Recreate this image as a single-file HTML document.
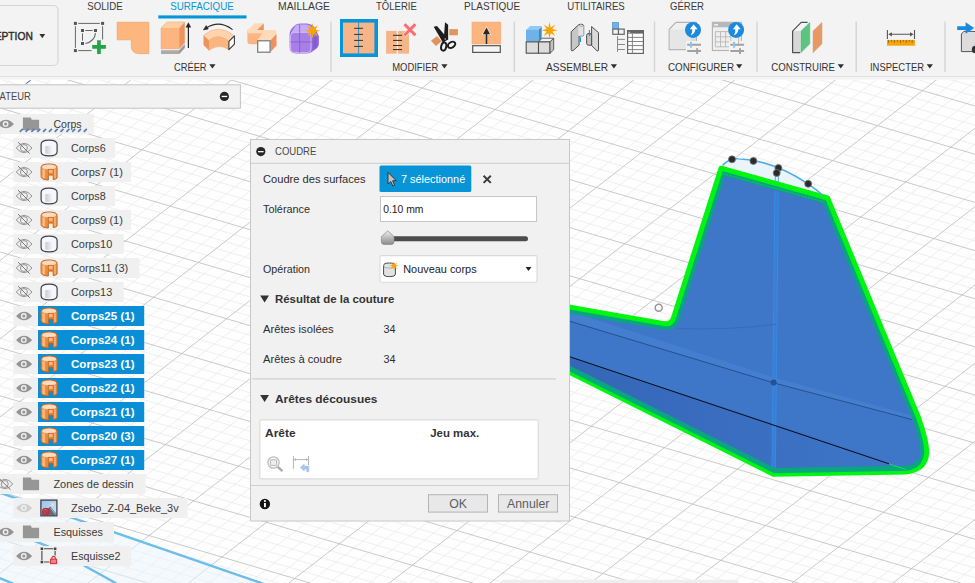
<!DOCTYPE html>
<html><head><meta charset="utf-8"><title>COUDRE</title>
<style>
html,body{margin:0;padding:0;background:#fff;overflow:hidden}
svg{display:block;font-family:'Liberation Sans', Arial, sans-serif}
text{white-space:pre}
</style></head><body>
<svg width="975" height="583" viewBox="0 0 975 583">
<rect width="975" height="583" fill="#fefefe"/>
<defs><clipPath id="vp"><rect x="0" y="79" width="975" height="504"/></clipPath></defs>
<g clip-path="url(#vp)" fill="none"><path d="M1265.5 -1265.7L-1852.3 1178.8M-888.5 -1010.6L4261.9 498.7M1280.3 -1261.4L-1837.9 1183.1M-897.4 -1003.6L4252.6 505.7M1295.0 -1257.1L-1823.5 1187.4M-906.3 -996.5L4243.4 512.7M1309.8 -1252.8L-1809.2 1191.7M-915.2 -989.4L4234.1 519.8M1339.3 -1244.2L-1780.4 1200.2M-933.0 -975.3L4215.6 533.8M1354.1 -1239.9L-1766.0 1204.5M-941.9 -968.3L4206.3 540.8M1368.8 -1235.5L-1751.6 1208.8M-950.7 -961.2L4197.0 547.9M1383.6 -1231.2L-1737.2 1213.0M-959.6 -954.2L4187.8 554.9M1413.1 -1222.6L-1708.4 1221.6M-977.4 -940.1L4169.2 568.9M1427.9 -1218.3L-1694.0 1225.9M-986.3 -933.0L4160.0 575.9M1442.6 -1214.0L-1679.6 1230.1M-995.2 -926.0L4150.7 583.0M1457.4 -1209.7L-1665.2 1234.4M-1004.1 -918.9L4141.5 590.0M1486.9 -1201.1L-1636.4 1243.0M-1021.8 -904.8L4123.0 604.0M1501.7 -1196.8L-1622.0 1247.2M-1030.7 -897.8L4113.7 611.0M1516.5 -1192.5L-1607.6 1251.5M-1039.6 -890.7L4104.4 618.1M1531.2 -1188.2L-1593.2 1255.8M-1048.5 -883.7L4095.2 625.1M1560.8 -1179.6L-1564.4 1264.3M-1066.2 -869.6L4076.7 639.1M1575.5 -1175.3L-1550.0 1268.6M-1075.1 -862.5L4067.4 646.1M1590.3 -1170.9L-1535.6 1272.9M-1084.0 -855.5L4058.2 653.1M1605.1 -1166.6L-1521.2 1277.2M-1092.9 -848.5L4048.9 660.1M1634.6 -1158.0L-1492.4 1285.7M-1110.6 -834.4L4030.5 674.1M1649.4 -1153.7L-1478.0 1290.0M-1119.5 -827.3L4021.2 681.2M1664.2 -1149.4L-1463.6 1294.3M-1128.4 -820.3L4012.0 688.2M1678.9 -1145.1L-1449.2 1298.6M-1137.2 -813.3L4002.7 695.2M1708.5 -1136.5L-1420.4 1307.1M-1155.0 -799.2L3984.2 709.2M1723.3 -1132.2L-1405.9 1311.4M-1163.8 -792.2L3975.0 716.2M1738.0 -1127.9L-1391.5 1315.7M-1172.7 -785.1L3965.8 723.2M1752.8 -1123.5L-1377.1 1319.9M-1181.6 -778.1L3956.5 730.2M1782.4 -1114.9L-1348.3 1328.5M-1199.3 -764.0L3938.1 744.2M1797.2 -1110.6L-1333.9 1332.8M-1208.2 -757.0L3928.8 751.2M1811.9 -1106.3L-1319.5 1337.1M-1217.0 -750.0L3919.6 758.2M1826.7 -1102.0L-1305.1 1341.3M-1225.9 -742.9L3910.4 765.2M1856.3 -1093.4L-1276.2 1349.9M-1243.6 -728.9L3891.9 779.2M1871.1 -1089.1L-1261.8 1354.2M-1252.5 -721.8L3882.7 786.2M1885.8 -1084.7L-1247.4 1358.5M-1261.3 -714.8L3873.5 793.2M1900.6 -1080.4L-1233.0 1362.7M-1270.2 -707.8L3864.2 800.2M1930.2 -1071.8L-1204.1 1371.3M-1287.9 -693.7L3845.8 814.1M1945.0 -1067.5L-1189.7 1375.6M-1296.7 -686.7L3836.6 821.1M1959.8 -1063.2L-1175.3 1379.9M-1305.6 -679.7L3827.3 828.1M1974.6 -1058.9L-1160.9 1384.2M-1314.4 -672.7L3818.1 835.1M2004.1 -1050.2L-1132.0 1392.7M-1332.1 -658.6L3799.7 849.1M2018.9 -1045.9L-1117.6 1397.0M-1341.0 -651.6L3790.5 856.1M2033.7 -1041.6L-1103.2 1401.3M-1349.8 -644.6L3781.2 863.1M2048.5 -1037.3L-1088.8 1405.6M-1358.7 -637.6L3772.0 870.1M2078.1 -1028.7L-1059.9 1414.1M-1376.3 -623.6L3753.6 884.0M2092.9 -1024.4L-1045.5 1418.4M-1385.2 -616.5L3744.4 891.0M2107.7 -1020.0L-1031.1 1422.7M-1394.0 -609.5L3735.2 898.0M2122.5 -1015.7L-1016.6 1427.0M-1402.9 -602.5L3726.0 905.0M2152.1 -1007.1L-987.8 1435.5M-1420.5 -588.5L3707.6 918.9M2166.9 -1002.8L-973.4 1439.8M-1429.4 -581.5L3698.4 925.9M2181.7 -998.5L-958.9 1444.1M-1438.2 -574.5L3689.1 932.9M2196.5 -994.2L-944.5 1448.4M-1447.0 -567.5L3679.9 939.9M2226.1 -985.5L-915.6 1457.0M-1464.7 -553.4L3661.5 953.8M2240.9 -981.2L-901.2 1461.3M-1473.5 -546.4L3652.3 960.8M2255.7 -976.9L-886.8 1465.5M-1482.4 -539.4L3643.1 967.8M2270.5 -972.6L-872.3 1469.8M-1491.2 -532.4L3633.9 974.7M2300.1 -963.9L-843.5 1478.4M-1508.9 -518.4L3615.5 988.7M2314.9 -959.6L-829.0 1482.7M-1517.7 -511.4L3606.3 995.7M2329.7 -955.3L-814.6 1487.0M-1526.5 -504.4L3597.2 1002.6M2344.5 -951.0L-800.2 1491.3M-1535.3 -497.4L3588.0 1009.6M2374.1 -942.3L-771.3 1499.8M-1553.0 -483.4L3569.6 1023.5M2388.9 -938.0L-756.9 1504.1M-1561.8 -476.4L3560.4 1030.5M2403.7 -933.7L-742.4 1508.4M-1570.6 -469.4L3551.2 1037.5M2418.5 -929.4L-728.0 1512.7M-1579.4 -462.4L3542.0 1044.4M2448.1 -920.8L-699.1 1521.3M-1597.1 -448.4L3523.6 1058.4M2462.9 -916.4L-684.7 1525.6M-1605.9 -441.4L3514.5 1065.3M2477.8 -912.1L-670.2 1529.8M-1614.7 -434.4L3505.3 1072.3M2492.6 -907.8L-655.8 1534.1M-1623.5 -427.4L3496.1 1079.2M2522.2 -899.2L-626.9 1542.7M-1641.1 -413.5L3477.7 1093.2M2537.0 -894.8L-612.4 1547.0M-1650.0 -406.5L3468.5 1100.1M2551.8 -890.5L-598.0 1551.3M-1658.8 -399.5L3459.4 1107.1M2566.6 -886.2L-583.5 1555.6M-1667.6 -392.5L3450.2 1114.0M2596.3 -877.5L-554.6 1564.2M-1685.2 -378.5L3431.8 1127.9M2611.1 -873.2L-540.2 1568.4M-1694.0 -371.5L3422.7 1134.9M2625.9 -868.9L-525.8 1572.7M-1702.8 -364.5L3413.5 1141.9M2640.7 -864.6L-511.3 1577.0M-1711.6 -357.6L3404.3 1148.8M2670.4 -855.9L-482.4 1585.6M-1729.2 -343.6L3386.0 1162.7M2685.2 -851.6L-467.9 1589.9M-1738.0 -336.6L3376.8 1169.7M2700.0 -847.3L-453.5 1594.2M-1746.8 -329.6L3367.6 1176.6M2714.8 -843.0L-439.0 1598.5M-1755.6 -322.7L3358.5 1183.6M2744.5 -834.3L-410.1 1607.1M-1773.2 -308.7L3340.1 1197.5M2759.3 -830.0L-395.7 1611.4M-1782.0 -301.7L3331.0 1204.4M2774.1 -825.7L-381.2 1615.7M-1790.8 -294.7L3321.8 1211.4M2788.9 -821.3L-366.8 1619.9M-1799.6 -287.8L3312.7 1218.3M2818.6 -812.7L-337.9 1628.5M-1817.2 -273.8L3294.3 1232.2M2833.4 -808.4L-323.4 1632.8M-1826.0 -266.8L3285.2 1239.1M2848.3 -804.1L-308.9 1637.1M-1834.7 -259.9L3276.0 1246.1M2863.1 -799.7L-294.5 1641.4M-1843.5 -252.9L3266.9 1253.0M2892.7 -791.1L-265.6 1650.0M-1861.1 -238.9L3248.6 1266.9M2907.6 -786.7L-251.1 1654.3M-1869.9 -232.0L3239.4 1273.8M2922.4 -782.4L-236.6 1658.6M-1878.7 -225.0L3230.3 1280.8M2937.2 -778.1L-222.2 1662.9M-1887.5 -218.0L3221.1 1287.7M2966.9 -769.4L-193.2 1671.5M-1905.0 -204.1L3202.8 1301.6M2981.7 -765.1L-178.8 1675.8M-1913.8 -197.1L3193.7 1308.5M2996.6 -760.8L-164.3 1680.1M-1922.6 -190.2L3184.5 1315.4M3011.4 -756.5L-149.9 1684.4M-1931.4 -183.2L3175.4 1322.4M3041.1 -747.8L-120.9 1692.9M-1948.9 -169.3L3157.1 1336.2M3055.9 -743.5L-106.4 1697.2M-1957.7 -162.3L3147.9 1343.2M3070.8 -739.2L-92.0 1701.5M-1966.5 -155.4L3138.8 1350.1M3085.6 -734.8L-77.5 1705.8M-1975.2 -148.4L3129.7 1357.0M3115.3 -726.2L-48.6 1714.4M-1992.8 -134.5L3111.4 1370.9M3130.1 -721.8L-34.1 1718.7M-2001.6 -127.5L3102.2 1377.8M3145.0 -717.5L-19.6 1723.0M-2010.3 -120.6L3093.1 1384.7M3159.8 -713.2L-5.2 1727.3M-2019.1 -113.6L3084.0 1391.7M3189.5 -704.5L23.8 1735.9M-2036.6 -99.7L3065.7 1405.5M3204.3 -700.2L38.3 1740.2M-2045.4 -92.7L3056.6 1412.4M3219.2 -695.9L52.7 1744.5M-2054.2 -85.8L3047.4 1419.4M3234.0 -691.5L67.2 1748.8M-2062.9 -78.8L3038.3 1426.3M3263.7 -682.9L96.2 1757.4M-2080.4 -64.9L3020.1 1440.1M3278.6 -678.5L110.6 1761.7M-2089.2 -58.0L3010.9 1447.0M3293.4 -674.2L125.1 1766.0M-2098.0 -51.0L3001.8 1454.0M3308.3 -669.9L139.6 1770.3M-2106.7 -44.1L2992.7 1460.9M3338.0 -661.2L168.6 1778.9M-2124.2 -30.2L2974.4 1474.7M3352.8 -656.9L183.0 1783.2M-2133.0 -23.2L2965.3 1481.6M3367.7 -652.6L197.5 1787.5M-2141.7 -16.3L2956.2 1488.5M3382.5 -648.2L212.0 1791.8M-2150.5 -9.3L2947.1 1495.4M3412.2 -639.6L241.0 1800.4M-2168.0 4.5L2928.8 1509.3M3427.1 -635.2L255.5 1804.7M-2176.7 11.5L2919.7 1516.2M3441.9 -630.9L269.9 1809.0M-2185.5 18.4L2910.6 1523.1M3456.8 -626.6L284.4 1813.3M-2194.2 25.4L2901.5 1530.0M3486.5 -617.9L313.4 1821.9M-2211.7 39.2L2883.3 1543.8M3501.4 -613.6L327.9 1826.2M-2220.5 46.2L2874.2 1550.7M3516.2 -609.2L342.4 1830.5M-2229.2 53.1L2865.1 1557.6M3531.1 -604.9L356.9 1834.8M-2238.0 60.1L2855.9 1564.5M3560.8 -596.2L385.8 1843.4M-2255.5 73.9L2837.7 1578.3M3575.7 -591.9L400.3 1847.7M-2264.2 80.9L2828.6 1585.2M3590.5 -587.6L414.8 1852.0M-2272.9 87.8L2819.5 1592.1M3605.4 -583.2L429.3 1856.3M-2281.7 94.7L2810.4 1599.0M3635.1 -574.5L458.3 1864.9M-2299.1 108.6L2792.2 1612.8M3650.0 -570.2L472.8 1869.2M-2307.9 115.5L2783.1 1619.7M3664.9 -565.9L487.3 1873.5M-2316.6 122.5L2774.0 1626.6M3679.7 -561.5L501.8 1877.8M-2325.3 129.4L2764.9 1633.5M3709.5 -552.9L530.8 1886.5M-2342.8 143.2L2746.7 1647.3M3724.3 -548.5L545.3 1890.8M-2351.5 150.2L2737.6 1654.2M3739.2 -544.2L559.8 1895.1M-2360.3 157.1L2728.5 1661.1M3754.1 -539.9L574.3 1899.4M-2369.0 164.0L2719.4 1668.0" stroke="#eaeaea" stroke-width=".75"/>
<path d="M1250.8 -1270.0L-1866.7 1174.6M-879.6 -1017.7L4271.2 491.7M1324.5 -1248.5L-1794.8 1195.9M-924.1 -982.4L4224.8 526.8M1398.3 -1226.9L-1722.8 1217.3M-968.5 -947.1L4178.5 561.9M1472.2 -1205.4L-1650.8 1238.7M-1013.0 -911.9L4132.2 597.0M1546.0 -1183.9L-1578.8 1260.1M-1057.4 -876.6L4085.9 632.1M1619.8 -1162.3L-1506.8 1281.4M-1101.7 -841.4L4039.7 667.1M1693.7 -1140.8L-1434.8 1302.8M-1146.1 -806.2L3993.5 702.2M1767.6 -1119.2L-1362.7 1324.2M-1190.4 -771.1L3947.3 737.2M1841.5 -1097.7L-1290.6 1345.6M-1234.7 -735.9L3901.1 772.2M1915.4 -1076.1L-1218.6 1367.0M-1279.0 -700.8L3855.0 807.2M1989.4 -1054.6L-1146.5 1388.4M-1323.3 -665.7L3808.9 842.1M2063.3 -1033.0L-1074.4 1409.8M-1367.5 -630.6L3762.8 877.0M2137.3 -1011.4L-1002.2 1431.3M-1411.7 -595.5L3716.8 911.9M2211.3 -989.8L-930.1 1452.7M-1455.9 -560.4L3670.7 946.8M2285.3 -968.3L-857.9 1474.1M-1500.0 -525.4L3624.7 981.7M2359.3 -946.7L-785.7 1495.5M-1544.2 -490.4L3578.8 1016.6M2433.3 -925.1L-713.5 1517.0M-1588.3 -455.4L3532.8 1051.4M2507.4 -903.5L-641.3 1538.4M-1632.3 -420.5L3486.9 1086.2M2581.5 -881.9L-569.1 1559.9M-1676.4 -385.5L3441.0 1121.0M2655.5 -860.3L-496.9 1581.3M-1720.4 -350.6L3395.1 1155.8M2729.6 -838.6L-424.6 1602.8M-1764.4 -315.7L3349.3 1190.5M2803.8 -817.0L-352.3 1624.2M-1808.4 -280.8L3303.5 1225.2M2877.9 -795.4L-280.0 1645.7M-1852.3 -245.9L3257.7 1260.0M2952.1 -773.8L-207.7 1667.2M-1896.2 -211.1L3212.0 1294.6M3026.2 -752.1L-135.4 1688.6M-1940.1 -176.2L3166.2 1329.3M3100.4 -730.5L-63.0 1710.1M-1984.0 -141.4L3120.5 1364.0M3174.6 -708.9L9.3 1731.6M-2027.9 -106.6L3074.8 1398.6M3248.9 -687.2L81.7 1753.1M-2071.7 -71.9L3029.2 1433.2M3323.1 -665.6L154.1 1774.6M-2115.5 -37.1L2983.6 1467.8M3397.4 -643.9L226.5 1796.1M-2159.2 -2.4L2938.0 1502.4M3471.7 -622.2L298.9 1817.6M-2203.0 32.3L2892.4 1536.9M3546.0 -600.6L371.4 1839.1M-2246.7 67.0L2846.8 1571.4M3620.3 -578.9L443.8 1860.6M-2290.4 101.7L2801.3 1605.9M3694.6 -557.2L516.3 1882.1M-2334.1 136.3L2755.8 1640.4M3768.9 -535.5L588.8 1903.7M-2377.7 170.9L2710.4 1674.9" stroke="#bdbdbd" stroke-width=".8"/></g>
<g clip-path="url(#vp)" fill="none" stroke="#6cbde9" stroke-width="2.4">
<path d="M0 492.8 L262 583.4 L0 583Z" fill="#eaf4fb" fill-opacity=".55" stroke="none"/>
<path d="M-3 491.8 L263 583.7"/><path d="M-3 527.6 L38 542.3 Q66 553 86.2 566.7 L112 581 L117 584"/><path d="M-3 577 L14 584"/>
</g>
<g clip-path="url(#vp)">
<defs><clipPath id="shp"><path d="M560 305.4 L664 323.6 Q671.5 325 673.6 317.5 L721 168.2 L827.6 198 L918.5 417.5 Q926.5 440 926.8 452 Q926 470 906 471.9 L773.4 474.2 L560 367.5 Z"/></clipPath><linearGradient id="dk" gradientUnits="userSpaceOnUse" x1="560" y1="0" x2="900" y2="0"><stop offset="0" stop-color="#3566b8"/><stop offset=".55" stop-color="#3a6ec0"/><stop offset="1" stop-color="#3e77c7"/></linearGradient><linearGradient id="dk2" gradientUnits="userSpaceOnUse" x1="560" y1="0" x2="760" y2="0"><stop offset="0" stop-color="#3a6fc1"/><stop offset="1" stop-color="#3e77c7"/></linearGradient></defs>
<path d="M723 165 Q729 158.5 738 159 Q770 160 808 184 Q818 190 824 196 L721 167Z" fill="#eaf4fb"/>
<path d="M775.4 172 L775.2 186 M778.4 168 L778.3 187" stroke="#5bb3e6" stroke-width="1.1" fill="none"/>
<path d="M560 305.4 L664 323.6 Q671.5 325 673.6 317.5 L721 168.2 L827.6 198 L918.5 417.5 Q926.5 440 926.8 452 Q926 470 906 471.9 L773.4 474.2 L560 367.5 Z" fill="#3e77c7"/>
<g clip-path="url(#shp)">
<path d="M560 353.5 L900 465 L906 471 L773 474 L560 368Z" fill="url(#dk)"/>
<path d="M560 308 L774 377.5 L912 415.6 L912 420 L774 383 L560 318Z" fill="#4783d3" opacity=".7"/>
<path d="M560 305.4 L664 323.6 Q671.5 325 673.6 317.5 L721 168.2 L827.6 198 L918.5 417.5 Q926.5 440 926.8 452 Q926 470 906 471.9 L773.4 474.2 L560 367.5 Z" fill="none" stroke="#0aa482" stroke-width="12.4" stroke-linejoin="round"/>
</g>
<path d="M776.6 191.6 L773.65 472" stroke="#3b7fd3" stroke-width="2.4" fill="none"/><path d="M774.9 191 L772 472 M778.3 192 L775.3 472" stroke="#358ae6" stroke-width="1.1" fill="none"/>
<path d="M569 321 L773.4 382.8 L912 419.6" stroke="#27508f" stroke-width="1" fill="none"/>
<path d="M569 356.5 L889 463.8" stroke="#0a0a14" stroke-width="1" fill="none"/>
<circle cx="773.6" cy="382.6" r="3" fill="#264f94"/>
<path d="M560 305.4 L664 323.6 Q671.5 325 673.6 317.5 L721 168.2 L827.6 198 L918.5 417.5 Q926.5 440 926.8 452 Q926 470 906 471.9 L773.4 474.2 L560 367.5 Z" fill="none" stroke="#00f510" stroke-width="5" stroke-linejoin="round"/>
<path d="M561.3 364.8 L774.7 470.9 L906 468.4 Q915 467 919 462" stroke="#0aa680" stroke-width="4.6" fill="none" stroke-linejoin="round" clip-path="url(#shp)"/>
<path d="M889 463.8 L906 469.6" stroke="#18d860" stroke-width="1" fill="none"/>
<path d="M677 328.6 Q730 330.2 776 324.4" stroke="#3264ba" stroke-width="1" fill="none" opacity=".7"/>
<path d="M722.6 173.6 L825 202.2" stroke="#00e030" stroke-width=".7" stroke-dasharray="2.2 1.2" fill="none"/>
<path d="M722.5 165.5 Q729 158 738 158.8 Q772 160 808 183.8 Q817 190 822.5 195" fill="none" stroke="#4faee6" stroke-width="1.6"/>
<circle cx="732" cy="159.3" r="3.5" fill="#2a2a2a" stroke="#7a7a7a" stroke-width="0.8"/>
<circle cx="753.4" cy="160.9" r="3.5" fill="#2a2a2a" stroke="#7a7a7a" stroke-width="0.8"/>
<circle cx="778.4" cy="168" r="3.5" fill="#2a2a2a" stroke="#7a7a7a" stroke-width="0.8"/>
<circle cx="776.7" cy="172.9" r="3.5" fill="#2a2a2a" stroke="#7a7a7a" stroke-width="0.8"/>
<circle cx="808.2" cy="183.8" r="3.5" fill="#2a2a2a" stroke="#7a7a7a" stroke-width="0.8"/>
<circle cx="658.7" cy="307.8" r="3.5" fill="#fdfdfd" stroke="#979797" stroke-width="1.5"/>
</g>
<rect x="0" y="0" width="975" height="79.5" fill="#f3f3f3"/>
<rect x="0" y="76" width="975" height="1" fill="#e2e2e2"/>
<rect x="0" y="79" width="975" height="1" fill="#f8f8f8"/>
<rect x="-10" y="5.5" width="68" height="60" rx="4.5" fill="none" stroke="#d6d6d6" stroke-width="1.2"/>
<text x="-35.5" y="40.0" font-size="11.3" fill="#2e2e2e" textLength="68.3" lengthAdjust="spacingAndGlyphs" stroke="#2e2e2e" stroke-width=".45">CONCEPTION</text>
<path d="M39.4 34 L45.2 34 L42.3 38.2Z" fill="#333"/>
<text x="87.2" y="10.0" font-size="11.3" fill="#3a3a3a" textLength="35.4" lengthAdjust="spacingAndGlyphs">SOLIDE</text>
<text x="170.2" y="10.0" font-size="11.3" fill="#0696d7" textLength="63.6" lengthAdjust="spacingAndGlyphs">SURFACIQUE</text>
<text x="278.0" y="10.0" font-size="11.3" fill="#3a3a3a" textLength="52.0" lengthAdjust="spacingAndGlyphs">MAILLAGE</text>
<text x="376.0" y="10.0" font-size="11.3" fill="#3a3a3a" textLength="40.8" lengthAdjust="spacingAndGlyphs">TÔLERIE</text>
<text x="464.0" y="10.0" font-size="11.3" fill="#3a3a3a" textLength="56.2" lengthAdjust="spacingAndGlyphs">PLASTIQUE</text>
<text x="567.2" y="10.0" font-size="11.3" fill="#3a3a3a" textLength="57.6" lengthAdjust="spacingAndGlyphs">UTILITAIRES</text>
<text x="670.0" y="10.0" font-size="11.3" fill="#3a3a3a" textLength="34.0" lengthAdjust="spacingAndGlyphs">GÉRER</text>
<rect x="158.3" y="15.4" width="88.2" height="3.1" fill="#0696d7"/>
<text x="174.0" y="71.0" font-size="11.3" fill="#333" textLength="32.6" lengthAdjust="spacingAndGlyphs">CRÉER</text>
<path d="M209.3 64.3 L215.5 64.3 L212.4 68.5Z" fill="#2e2e2e"/>
<text x="392.2" y="71.0" font-size="11.3" fill="#333" textLength="46.1" lengthAdjust="spacingAndGlyphs">MODIFIER</text>
<path d="M441.29999999999995 64.3 L447.5 64.3 L444.4 68.5Z" fill="#2e2e2e"/>
<text x="546.0" y="71.0" font-size="11.3" fill="#333" textLength="62.0" lengthAdjust="spacingAndGlyphs">ASSEMBLER</text>
<path d="M610.8 64.3 L617.0 64.3 L613.9 68.5Z" fill="#2e2e2e"/>
<text x="668.0" y="71.0" font-size="11.3" fill="#333" textLength="66.0" lengthAdjust="spacingAndGlyphs">CONFIGURER</text>
<path d="M736.1 64.3 L742.3000000000001 64.3 L739.2 68.5Z" fill="#2e2e2e"/>
<text x="771.3" y="71.0" font-size="11.3" fill="#333" textLength="63.7" lengthAdjust="spacingAndGlyphs">CONSTRUIRE</text>
<path d="M837.6999999999999 64.3 L843.9 64.3 L840.8 68.5Z" fill="#2e2e2e"/>
<text x="870.0" y="71.0" font-size="11.3" fill="#333" textLength="54.0" lengthAdjust="spacingAndGlyphs">INSPECTER</text>
<path d="M926.6999999999999 64.3 L932.9 64.3 L929.8 68.5Z" fill="#2e2e2e"/>
<rect x="330.3" y="21.5" width="1.4" height="50.5" fill="#d4d4d4"/>
<rect x="513.5999999999999" y="21.5" width="1.4" height="50.5" fill="#d4d4d4"/>
<rect x="653.8" y="21.5" width="1.4" height="50.5" fill="#d4d4d4"/>
<rect x="756.3" y="21.5" width="1.4" height="50.5" fill="#d4d4d4"/>
<rect x="855.5" y="21.5" width="1.4" height="50.5" fill="#d4d4d4"/>
<rect x="944.3" y="21.5" width="1.4" height="50.5" fill="#d4d4d4"/>
<g fill="none" stroke="#666" stroke-width="1"><path d="M78.2 23.4 H99.9 M75.4 26.2 V47.9 M102.6 26.2 V39.5 M78.2 50.6 H91.5"/><path d="M85.3 30.5 H92.7 M82.5 33.3 V40.7"/><path d="M95.5 33.1 Q94.6 41.4 85.4 43.5" stroke-width="1.1"/></g>
<rect x="73.9" y="21.9" width="3" height="3" fill="#555"/>
<rect x="101.1" y="21.9" width="3" height="3" fill="#555"/>
<rect x="73.9" y="49.1" width="3" height="3" fill="#555"/>
<rect x="81.0" y="29.0" width="3" height="3" fill="#555"/>
<rect x="94.0" y="29.0" width="3" height="3" fill="#555"/>
<rect x="81.0" y="42.0" width="3" height="3" fill="#555"/>
<path d="M92.2 45.1 H97.1 V40.2 H100.8 V45.1 H105.9 V48.8 H100.8 V53.9 H97.1 V48.8 H92.2Z" fill="#22a447" stroke="#e8f3ea" stroke-width="1" paint-order="stroke"/>
<path d="M117.2 22.3 H148.8 V53.6 H138.4 Q131.6 53 131.3 46.4 V39.8 H117.2Z" fill="#fdb77e" stroke="#f1a36e" stroke-width=".8"/>
<path d="M161 50.2 H179.2 L184.7 44.2 V47.9 L179.2 53.9 H161Z" fill="#ababab"/><path d="M179.2 50.2 L184.7 44.2 V47.9 L179.2 53.9Z" fill="#9c9c9c"/>
<path d="M161 28 L167 22 H184.7 L179.2 28Z" fill="#fecfa5"/><rect x="161" y="28" width="18.2" height="20.8" fill="#fdb580"/><path d="M179.2 28 L184.7 22 V42.8 L179.2 48.8Z" fill="#ee9260"/>
<path d="M161 28 L167 22 H184.7 V42.8 L179.2 48.8 H161Z" fill="none" stroke="#f0a06c" stroke-width=".5"/>
<path d="M188.4 47.9 V26" stroke="#222" stroke-width="1.2"/><path d="M188.4 22.7 L186.1 27.2 H190.7Z" fill="#222" stroke="#222" stroke-width=".5" stroke-linejoin="round"/>
<path d="M203.5 35.4 Q218.7 22.6 234.4 35.9 L228.9 41.4 Q218.7 32.4 209 40.5Z" fill="#fed3ad" stroke="#f3a877" stroke-width=".5"/><path d="M209 40.5 Q218.7 32.6 228.9 41.4 V49.7 Q218.7 43 209 50.6Z" fill="#fdb580" stroke="#f3a877" stroke-width=".5"/><path d="M203.5 35.4 L209 40.5 V50.6 L203.5 45.1Z" fill="#ee9260"/><path d="M228.9 41.4 L234.4 35.9 V44.2 L228.9 49.7Z" fill="#fff" stroke="#3a3a3a" stroke-width="1.1" stroke-linejoin="round"/><path d="M232.6 29.6 Q219 19.6 206.4 28" fill="none" stroke="#2a2a2a" stroke-width="1.1"/><path d="M203.4 29.9 L206.2 25.6 L208.2 29Z" fill="#2a2a2a" stroke="#2a2a2a" stroke-width=".6" stroke-linejoin="round"/>
<path d="M247.4 30 H262.2 V44.2 H250.4 Q247.4 44.2 247.4 41.2Z" fill="#fdb580"/><path d="M247.6 29.9 L254.8 23.2 H263.8 L257.1 29.9 H274.5 Q276.5 29.9 276.5 32 V34 L270.5 40.2 H257.1 L262.2 33.5 H247.4 V31 Z" fill="#fedabb"/><path d="M263.8 23.2 V29.9 H257.1Z" fill="#ee9260"/><path d="M270.5 40.2 L276.5 34 V45.5 L270.5 52Z" fill="#ee9260"/><path d="M247.4 33.5 H262.2" stroke="#fcc39a" stroke-width=".6"/><rect x="257.7" y="40.8" width="12.4" height="11.4" fill="#fff" stroke="#777" stroke-width="1.2"/>
<path d="M289.6 35 Q289.6 30 293 27 L296 24.6 Q298 23.6 301 23.6 H307 Q312 24 315 28 L318.8 36 V44 Q318.8 46.5 316 49 L311 52.6 Q309 53.6 306 53.6 H296 Q289.6 53.4 289.6 47Z" fill="#9a6fe0"/><path d="M291 33 L295.6 25.4 Q297 24.4 300 24.4 H306.6 Q309.6 24.6 311.4 27 L313 32.2Z" fill="#c7abf4"/><rect x="290.6" y="32.4" width="20.4" height="20.2" rx="3.6" fill="#a67fe7" stroke="#d6c0f8" stroke-width=".9"/><path d="M299.6 24.6 V52.8 M290.4 41.9 H311.2" stroke="#8558cc" stroke-width=".8" fill="none"/><path d="M312.4 37.4 L318.4 35.6 V44.4 Q318.4 46 316.6 47.6 L312.4 50.6Z" fill="#8a62d2"/><path d="M315.2 36.6 V48.6" stroke="#7a50c4" stroke-width=".8"/>
<path d="M312.5 22.9 L313.6 28.1 L318.1 25.2 L315.2 29.7 L320.4 30.8 L315.2 31.9 L318.1 36.4 L313.6 33.5 L312.5 38.7 L311.4 33.5 L306.9 36.4 L309.8 31.9 L304.6 30.8 L309.8 29.7 L306.9 25.2 L311.4 28.1Z" fill="#f6a609"/>
<rect x="340" y="19" width="38" height="38" fill="#0696d7"/><rect x="343" y="22.6" width="31.4" height="30.8" fill="#f5b588"/><path d="M358.6 22.6 V53.4" stroke="#1a8fd0" stroke-width=".9"/><path d="M354.1 28.3 H363 M354.1 34.4 H363 M354.1 40.4 H363 M354.1 46.4 H363" stroke="#333" stroke-width="1" fill="none"/>
<rect x="386.1" y="30.9" width="10.6" height="22.8" fill="#f5b588"/><rect x="398.1" y="30.9" width="10.9" height="22.8" fill="#f5b588"/><path d="M393 35.3 H402.1 M393 40.4 H402.1 M393 45.5 H402.1 M393 49.6 H402.1" stroke="#2a2a2a" stroke-width="1" fill="none"/><path d="M404.5 24.3 L415.4 35.3 M415.4 24.3 L404.5 35.3" stroke="#f6ece6" stroke-width="4.4"/><path d="M404.5 24.3 L415.4 35.3 M415.4 24.3 L404.5 35.3" stroke="#ff6b72" stroke-width="3"/>
<rect x="449.3" y="29.1" width="8.6" height="6.2" fill="#e3945c"/><path d="M431 40.7 L437 36 L441.7 41.3 L435.9 46Z" fill="#e3945c"/><path d="M433.7 26.7 L437 26 L448.3 39.3 L443 42.7Z" fill="#1e1e1e"/><path d="M445 22.3 L448.1 24.7 V39.6 L443.7 40Z" fill="#1e1e1e"/><ellipse cx="443.7" cy="46.6" rx="2.5" ry="4.1" fill="none" stroke="#1e1e1e" stroke-width="2" transform="rotate(12 443.7 46.6)"/><ellipse cx="451.6" cy="44.8" rx="4" ry="2.7" fill="none" stroke="#1e1e1e" stroke-width="2" transform="rotate(-32 451.6 44.8)"/><circle cx="445.2" cy="39" r=".7" fill="#ddd"/>
<rect x="472" y="22.1" width="28.8" height="21.8" fill="#fdb580" stroke="#f3a672" stroke-width=".6"/><rect x="472.7" y="45.7" width="27.6" height="6.7" fill="#f5f5f5" stroke="#555" stroke-width="1.2"/><path d="M486.5 26 L481.6 35 H491.4Z" fill="#fbe4d2"/><path d="M486.5 44 V33" stroke="#2a2a2a" stroke-width="1.5"/><path d="M486.5 27.4 L482.9 34.2 H490.1Z" fill="#2a2a2a"/>
<path d="M526 29.9 L530.2 26 H541.7 L538.5 29.9Z" fill="#8ecbf5"/><rect x="526" y="29.9" width="12.5" height="12" fill="#6db3e8"/><path d="M538.5 29.9 L541.7 26.6 V38.6 L538.5 41.9Z" fill="#3d8bcb"/><rect x="526.2" y="41.9" width="12.3" height="11.3" fill="#dedede" stroke="#505050" stroke-width="1.1"/><path d="M538.5 41.9 L542.2 38.2 H553.7 L550 41.9Z" fill="#f4f4f4" stroke="#505050" stroke-width=".9" stroke-linejoin="round"/><rect x="538.5" y="41.9" width="11.5" height="11.3" fill="#dcdcdc" stroke="#505050" stroke-width="1.1"/><path d="M550 41.9 L553.7 38.2 V49.7 L550 53.2Z" fill="#c2c2c2" stroke="#505050" stroke-width=".9" stroke-linejoin="round"/>
<path d="M549.5 22.1 L550.7 27.4 L555.3 24.5 L552.4 29.1 L557.7 30.3 L552.4 31.5 L555.3 36.1 L550.7 33.2 L549.5 38.5 L548.3 33.2 L543.7 36.1 L546.6 31.5 L541.3 30.3 L546.6 29.1 L543.7 24.5 L548.3 27.4Z" fill="#f6a609"/>
<path d="M571.2 31.7 L578.6 24.8 Q580.8 23.6 583 24.6 Q583.8 25.2 583.7 26.2 V34.6 Q583.6 35.8 582.4 35.9 H579.1 V45.1 L573.1 50.6 Q571.4 51.4 571.2 49.8Z" fill="#c6c6c6" stroke="#505050" stroke-width="1" stroke-linejoin="round"/><path d="M578.3 26 Q579 24.6 581 24.4 Q583.6 24.6 583.6 26.4 V34.6 Q583.5 35.8 582.4 35.8 H578.3Z" fill="#e2e2e2"/><ellipse cx="581" cy="25.6" rx="1.7" ry=".8" fill="#f4f4f4" stroke="#777" stroke-width=".5"/><path d="M591.6 26.6 L598.5 32.6 V50.4 Q598.2 51.6 597 50.8 L591.6 45.5Z" fill="#dadada" stroke="#505050" stroke-width="1" stroke-linejoin="round"/><path d="M586.6 35.4 Q586.6 33.4 589 33.4 Q591.6 33.4 591.6 35.4 V45.2 H588.4 Q586.6 45 586.6 43.4Z" fill="#c4c4c4" stroke="#505050" stroke-width="1"/><path d="M580.5 37.2 V41.9 M589.4 29.9 V35.9" stroke="#1a8fe0" stroke-width="1.1"/>
<rect x="612.4" y="22.4" width="6.2" height="6.2" fill="#6db3e8" stroke="#4a96d2" stroke-width=".7"/><rect x="612.8" y="29.1" width="5.7" height="5.2" fill="#f4f4f4" stroke="#666" stroke-width="1.2"/><rect x="618.5" y="29.1" width="5.7" height="5.2" fill="#f4f4f4" stroke="#666" stroke-width="1.2"/><path d="M617.5 36 V51.9 M617.5 39.4 H624.9 M617.5 44.5 H624.9 M617.5 49.5 H624.9" stroke="#8a8a8a" stroke-width="1" fill="none"/><rect x="627.6" y="30.6" width="15.8" height="22.8" fill="#fff" stroke="#666" stroke-width="1.2"/><rect x="627.6" y="30.6" width="15.8" height="3" fill="#666"/><rect x="628.6" y="31.9" width="1.6" height=".8" fill="#eee"/><path d="M632.4 33.6 V53.4 M627.6 37.4 H643.4 M627.6 41.5 H643.4 M627.6 45.6 H643.4 M627.6 49.6 H643.4" stroke="#777" stroke-width=".9" fill="none"/>
<path d="M669.2 29.4 L675.9 22.4 H696.4 V49.7 H669.2Z" fill="#f0f0f0" stroke="#b2b2b2" stroke-width="1.2" stroke-linejoin="round"/><rect x="669.8" y="29.4" width="21" height="19.7" fill="#e6e6e6"/><path d="M691 29.4 L696 24 V49 H691Z" fill="#dcdcdc"/><rect x="686" y="41" width="16" height="14" fill="#f3f3f3"/>
<path d="M687.2 44.8 H701.0 M687.2 50.9 H701.0" stroke="#a2a2a2" stroke-width="2"/><path d="M691 41.7 V47.8" stroke="#8ec4ec" stroke-width="2"/><path d="M697.1 48.2 V54" stroke="#a2a2a2" stroke-width="2"/>
<circle cx="693" cy="29.9" r="8" fill="#1a8ae0"/><path d="M693.6 24.299999999999997 L697.6 29.299999999999997 H695.2 Q695.4 33.3 690.8 35.3 Q692.8 32.699999999999996 692.2 29.299999999999997 H689.8Z" fill="#fff"/>
<rect x="712.4" y="22.3" width="29" height="28.2" fill="#efefef" stroke="#b2b2b2" stroke-width="1.1"/><rect x="712.4" y="22.3" width="29" height="5" fill="#b8b8b8"/><rect x="714.2" y="24" width="3.8" height="1.6" fill="#eee"/><path d="M715.4 31.6 H731 M715.4 36.8 H731 M715.4 41.9 H731 M715.4 46.8 H731 M715.4 31.6 V46.8 M720.5 31.6 V46.8 M725.6 31.6 V46.8 M730.8 31.6 V46.8" stroke="#bcbcbc" stroke-width="1" fill="none"/><rect x="729" y="41" width="16" height="14" fill="#f3f3f3"/><path d="M738.6 34 V46" stroke="#bcbcbc" stroke-width="1"/>
<path d="M730.3 44.8 H744.0999999999999 M730.3 50.9 H744.0999999999999" stroke="#a2a2a2" stroke-width="2"/><path d="M734.1 41.7 V47.8" stroke="#8ec4ec" stroke-width="2"/><path d="M740 48.2 V54" stroke="#a2a2a2" stroke-width="2"/>
<circle cx="736.1" cy="29.9" r="8" fill="#1a8ae0"/><path d="M736.7 24.299999999999997 L740.7 29.299999999999997 H738.3000000000001 Q738.5 33.3 733.9 35.3 Q735.9 32.699999999999996 735.3000000000001 29.299999999999997 H732.9Z" fill="#fff"/>
<path d="M792.6 31.1 L801.2 22.4 H808 L800.1 31.1Z" fill="#f4f4f4"/><rect x="792.6" y="31.1" width="7.8" height="21.5" fill="#d8d8d8"/><path d="M807.6 22.4 H801.2 L792.6 31.1 V52.6 H800.2" fill="none" stroke="#505050" stroke-width="1.2" stroke-linejoin="round"/><path d="M801 31.1 L809.8 22.6 V43.8 L801 52.6Z" fill="#5bc580" stroke="#4fb474" stroke-width=".5"/><path d="M813.1 31.1 L821.9 22.6 V43.8 L813.1 52.6Z" fill="#e59a66" stroke="#d88c58" stroke-width=".5"/>
<rect x="887" y="39.9" width="27.9" height="5.8" fill="#f7a400"/><path d="M888.6 40.2 V42.8 M894.4 40.2 V42.8 M900.5 40.2 V42.8 M906.3 40.2 V42.8 M912.2 40.2 V42.8 M891.5 40.2 V41.8 M897.5 40.2 V41.8 M903.4 40.2 V41.8 M909.2 40.2 V41.8" stroke="#6a5a3a" stroke-width=".8"/><path d="M887.4 30.1 V38.9 M914.5 30.1 V38.9 M890 34.3 H912" stroke="#555" stroke-width="1.1"/><path d="M888.3 34.3 L891.9 32.2 V36.4Z M913.6 34.3 L910 32.2 V36.4Z" fill="#555"/>
<path d="M961.4 34 L963.8 31.4 H976 V51.6 H961.4Z" fill="#dcdcdc" stroke="#555" stroke-width="1"/><path d="M957.2 26.2 H965.6 V22.3 L974.2 27.9 L965.6 33.7 V29.9 H957.2Z" fill="#1a8ae0"/><circle cx="975.6" cy="49.6" r="3.8" fill="#333"/>
<rect x="-1" y="84.8" width="241.4" height="23.4" fill="#f2f2f2" stroke="#c4c4c4" stroke-width="1"/>
<text x="-29.1" y="100.0" font-size="11.3" fill="#4a4a4a" textLength="59.9" lengthAdjust="spacingAndGlyphs">NAVIGATEUR</text>
<circle cx="224.4" cy="96.4" r="4.6" fill="#262626"/><rect x="221.6" y="95.8" width="5.6" height="1.3" fill="#fff"/>
<path d="M26.2 83.6 L30.6 80.4" stroke="#5a5af0" stroke-width="1"/>
<rect x="-1" y="114" width="94.7" height="20" fill="#f0f0f0"/>
<g opacity="1"><path d="M-2.0999999999999996 124 Q5.9 115.4 13.9 124 Q5.9 132.6 -2.0999999999999996 124Z" fill="#939393"/><circle cx="5.6000000000000005" cy="123.9" r="2.9" fill="#f0f0f0"/><circle cx="5.6000000000000005" cy="123.9" r="1.5" fill="#939393"/></g>
<path d="M22.900000000000002 117.39999999999999 H30.9 L31.700000000000003 119.8 H39.1 V130.2 H22.900000000000002Z" fill="#969696"/>
<text x="53.4" y="127.9" font-size="11.3" fill="#3a3a3a" textLength="28.2" lengthAdjust="spacingAndGlyphs">Corps</text>
<path d="M19.8 131.9 l3 -3.1M25.6 131.9 l3 -3.1M31.4 131.9 l3 -3.1M37.3 131.9 l3 -3.1M43.1 131.9 l3 -3.1M48.9 131.9 l3 -3.1M54.7 131.9 l3 -3.1M60.5 131.9 l3 -3.1M66.4 131.9 l3 -3.1M72.2 131.9 l3 -3.1M78.0 131.9 l3 -3.1M83.8 131.9 l3 -3.1" stroke="#5a7eb0" stroke-width="1.7" fill="none"/>
<rect x="13.4" y="138" width="101.6" height="20" fill="#f0f0f0"/>
<g fill="none" stroke="#949494" stroke-width="1"><path d="M16.200000000000003 148 Q24.1 138.6 32.0 148 Q24.1 157.4 16.200000000000003 148Z"/><circle cx="23.900000000000002" cy="148" r="3.5"/><path d="M18.1 142.2 L29.700000000000003 153.7" stroke="#777"/></g>
<defs><linearGradient id="cy140" x1="0" x2="1"><stop offset="0" stop-color="#c9ccd4"/><stop offset="1" stop-color="#f3f4f6"/></linearGradient></defs><path d="M41.1 144.29999999999998 C41.1 141.29999999999998 44.1 140.1 49.1 140.1 C54.1 140.1 57.1 141.29999999999998 57.1 144.29999999999998 V151.7 C57.1 154.7 54.1 155.79999999999998 49.1 155.79999999999998 C44.1 155.79999999999998 41.1 154.7 41.1 151.7Z" fill="#f7f7f9" stroke="#3c4250" stroke-width="1.2"/><path d="M45.300000000000004 146.1 H52.1 V153.7 Q49.1 154.5 45.300000000000004 153.5Z" fill="url(#cy140)"/>
<text x="71.0" y="151.9" font-size="11.3" fill="#3a3a3a" textLength="34.6" lengthAdjust="spacingAndGlyphs">Corps6</text>
<rect x="13.4" y="162" width="117.6" height="20" fill="#f0f0f0"/>
<g fill="none" stroke="#949494" stroke-width="1"><path d="M16.200000000000003 172 Q24.1 162.6 32.0 172 Q24.1 181.4 16.200000000000003 172Z"/><circle cx="23.900000000000002" cy="172" r="3.5"/><path d="M18.1 166.2 L29.700000000000003 177.7" stroke="#777"/></g>
<defs><linearGradient id="sb164" x1="0" x2="1"><stop offset="0" stop-color="#f6a560"/><stop offset=".35" stop-color="#ee8a3a"/><stop offset="1" stop-color="#f29a52"/></linearGradient></defs><path d="M41.1 167.4 Q41.1 164 49.1 164 Q57.1 164 57.1 167.4 V178 Q55.6 179.4 53.2 179.6 V175.1 H48.300000000000004 V180 Q41.1 179.6 41.1 176.6Z" fill="url(#sb164)" stroke="#c8651a" stroke-width="1"/><ellipse cx="49.1" cy="167.1" rx="7" ry="2.5" fill="#fcdcc0"/><rect x="48.300000000000004" y="169.3" width="4.9" height="4.6" fill="#f8b482" stroke="#c8651a" stroke-width=".8"/><rect x="42.7" y="169.6" width="2.2" height="8.6" fill="#fbc79c" opacity=".75"/><rect x="54.1" y="169.6" width="1.6" height="8.4" fill="#fbc79c" opacity=".5"/>
<text x="71.0" y="175.9" font-size="11.3" fill="#3a3a3a" textLength="51.9" lengthAdjust="spacingAndGlyphs">Corps7 (1)</text>
<rect x="13.4" y="186" width="101.6" height="20" fill="#f0f0f0"/>
<g fill="none" stroke="#949494" stroke-width="1"><path d="M16.200000000000003 196 Q24.1 186.6 32.0 196 Q24.1 205.4 16.200000000000003 196Z"/><circle cx="23.900000000000002" cy="196" r="3.5"/><path d="M18.1 190.2 L29.700000000000003 201.7" stroke="#777"/></g>
<defs><linearGradient id="cy188" x1="0" x2="1"><stop offset="0" stop-color="#c9ccd4"/><stop offset="1" stop-color="#f3f4f6"/></linearGradient></defs><path d="M41.1 192.29999999999998 C41.1 189.29999999999998 44.1 188.1 49.1 188.1 C54.1 188.1 57.1 189.29999999999998 57.1 192.29999999999998 V199.7 C57.1 202.7 54.1 203.79999999999998 49.1 203.79999999999998 C44.1 203.79999999999998 41.1 202.7 41.1 199.7Z" fill="#f7f7f9" stroke="#3c4250" stroke-width="1.2"/><path d="M45.300000000000004 194.1 H52.1 V201.7 Q49.1 202.5 45.300000000000004 201.5Z" fill="url(#cy188)"/>
<text x="71.0" y="199.9" font-size="11.3" fill="#3a3a3a" textLength="34.6" lengthAdjust="spacingAndGlyphs">Corps8</text>
<rect x="13.4" y="210" width="117.6" height="20" fill="#f0f0f0"/>
<g fill="none" stroke="#949494" stroke-width="1"><path d="M16.200000000000003 220 Q24.1 210.6 32.0 220 Q24.1 229.4 16.200000000000003 220Z"/><circle cx="23.900000000000002" cy="220" r="3.5"/><path d="M18.1 214.2 L29.700000000000003 225.7" stroke="#777"/></g>
<defs><linearGradient id="sb212" x1="0" x2="1"><stop offset="0" stop-color="#f6a560"/><stop offset=".35" stop-color="#ee8a3a"/><stop offset="1" stop-color="#f29a52"/></linearGradient></defs><path d="M41.1 215.4 Q41.1 212 49.1 212 Q57.1 212 57.1 215.4 V226 Q55.6 227.4 53.2 227.6 V223.1 H48.300000000000004 V228 Q41.1 227.6 41.1 224.6Z" fill="url(#sb212)" stroke="#c8651a" stroke-width="1"/><ellipse cx="49.1" cy="215.1" rx="7" ry="2.5" fill="#fcdcc0"/><rect x="48.300000000000004" y="217.3" width="4.9" height="4.6" fill="#f8b482" stroke="#c8651a" stroke-width=".8"/><rect x="42.7" y="217.6" width="2.2" height="8.6" fill="#fbc79c" opacity=".75"/><rect x="54.1" y="217.6" width="1.6" height="8.4" fill="#fbc79c" opacity=".5"/>
<text x="71.0" y="223.9" font-size="11.3" fill="#3a3a3a" textLength="51.9" lengthAdjust="spacingAndGlyphs">Corps9 (1)</text>
<rect x="13.4" y="234" width="110.4" height="20" fill="#f0f0f0"/>
<g fill="none" stroke="#949494" stroke-width="1"><path d="M16.200000000000003 244 Q24.1 234.6 32.0 244 Q24.1 253.4 16.200000000000003 244Z"/><circle cx="23.900000000000002" cy="244" r="3.5"/><path d="M18.1 238.2 L29.700000000000003 249.7" stroke="#777"/></g>
<defs><linearGradient id="cy236" x1="0" x2="1"><stop offset="0" stop-color="#c9ccd4"/><stop offset="1" stop-color="#f3f4f6"/></linearGradient></defs><path d="M41.1 240.29999999999998 C41.1 237.29999999999998 44.1 236.1 49.1 236.1 C54.1 236.1 57.1 237.29999999999998 57.1 240.29999999999998 V247.7 C57.1 250.7 54.1 251.79999999999998 49.1 251.79999999999998 C44.1 251.79999999999998 41.1 250.7 41.1 247.7Z" fill="#f7f7f9" stroke="#3c4250" stroke-width="1.2"/><path d="M45.300000000000004 242.1 H52.1 V249.7 Q49.1 250.5 45.300000000000004 249.5Z" fill="url(#cy236)"/>
<text x="71.0" y="247.9" font-size="11.3" fill="#3a3a3a" textLength="41.2" lengthAdjust="spacingAndGlyphs">Corps10</text>
<rect x="13.4" y="258" width="126.0" height="20" fill="#f0f0f0"/>
<g fill="none" stroke="#949494" stroke-width="1"><path d="M16.200000000000003 268 Q24.1 258.6 32.0 268 Q24.1 277.4 16.200000000000003 268Z"/><circle cx="23.900000000000002" cy="268" r="3.5"/><path d="M18.1 262.2 L29.700000000000003 273.7" stroke="#777"/></g>
<defs><linearGradient id="sb260" x1="0" x2="1"><stop offset="0" stop-color="#f6a560"/><stop offset=".35" stop-color="#ee8a3a"/><stop offset="1" stop-color="#f29a52"/></linearGradient></defs><path d="M41.1 263.4 Q41.1 260 49.1 260 Q57.1 260 57.1 263.4 V274 Q55.6 275.4 53.2 275.6 V271.1 H48.300000000000004 V276 Q41.1 275.6 41.1 272.6Z" fill="url(#sb260)" stroke="#c8651a" stroke-width="1"/><ellipse cx="49.1" cy="263.1" rx="7" ry="2.5" fill="#fcdcc0"/><rect x="48.300000000000004" y="265.3" width="4.9" height="4.6" fill="#f8b482" stroke="#c8651a" stroke-width=".8"/><rect x="42.7" y="265.6" width="2.2" height="8.6" fill="#fbc79c" opacity=".75"/><rect x="54.1" y="265.6" width="1.6" height="8.4" fill="#fbc79c" opacity=".5"/>
<text x="71.0" y="271.9" font-size="11.3" fill="#3a3a3a" textLength="57.2" lengthAdjust="spacingAndGlyphs">Corps11 (3)</text>
<rect x="13.4" y="282" width="110.4" height="20" fill="#f0f0f0"/>
<g fill="none" stroke="#949494" stroke-width="1"><path d="M16.200000000000003 292 Q24.1 282.6 32.0 292 Q24.1 301.4 16.200000000000003 292Z"/><circle cx="23.900000000000002" cy="292" r="3.5"/><path d="M18.1 286.2 L29.700000000000003 297.7" stroke="#777"/></g>
<defs><linearGradient id="cy284" x1="0" x2="1"><stop offset="0" stop-color="#c9ccd4"/><stop offset="1" stop-color="#f3f4f6"/></linearGradient></defs><path d="M41.1 288.3 C41.1 285.3 44.1 284.1 49.1 284.1 C54.1 284.1 57.1 285.3 57.1 288.3 V295.70000000000005 C57.1 298.70000000000005 54.1 299.8 49.1 299.8 C44.1 299.8 41.1 298.70000000000005 41.1 295.70000000000005Z" fill="#f7f7f9" stroke="#3c4250" stroke-width="1.2"/><path d="M45.300000000000004 290.1 H52.1 V297.70000000000005 Q49.1 298.5 45.300000000000004 297.5Z" fill="url(#cy284)"/>
<text x="71.0" y="295.9" font-size="11.3" fill="#3a3a3a" textLength="41.2" lengthAdjust="spacingAndGlyphs">Corps13</text>
<rect x="13.4" y="306" width="130.8" height="20" fill="#f0f0f0"/>
<rect x="38" y="306" width="106.2" height="20" fill="#0a8fd6"/>
<g opacity="1"><path d="M16.1 316 Q24.1 307.4 32.1 316 Q24.1 324.6 16.1 316Z" fill="#939393"/><circle cx="23.8" cy="315.9" r="2.9" fill="#f0f0f0"/><circle cx="23.8" cy="315.9" r="1.5" fill="#939393"/></g>
<defs><linearGradient id="sb308" x1="0" x2="1"><stop offset="0" stop-color="#f6a560"/><stop offset=".35" stop-color="#ee8a3a"/><stop offset="1" stop-color="#f29a52"/></linearGradient></defs><path d="M41.1 311.4 Q41.1 308 49.1 308 Q57.1 308 57.1 311.4 V322 Q55.6 323.4 53.2 323.6 V319.1 H48.300000000000004 V324 Q41.1 323.6 41.1 320.6Z" fill="url(#sb308)" stroke="#c8651a" stroke-width="1"/><ellipse cx="49.1" cy="311.1" rx="7" ry="2.5" fill="#fcdcc0"/><rect x="48.300000000000004" y="313.3" width="4.9" height="4.6" fill="#f8b482" stroke="#c8651a" stroke-width=".8"/><rect x="42.7" y="313.6" width="2.2" height="8.6" fill="#fbc79c" opacity=".75"/><rect x="54.1" y="313.6" width="1.6" height="8.4" fill="#fbc79c" opacity=".5"/>
<text x="71.0" y="319.9" font-size="11.6" font-weight="bold" fill="#fff" textLength="63.5" lengthAdjust="spacingAndGlyphs">Corps25 (1)</text>
<rect x="13.4" y="330" width="130.8" height="20" fill="#f0f0f0"/>
<rect x="38" y="330" width="106.2" height="20" fill="#0a8fd6"/>
<g opacity="1"><path d="M16.1 340 Q24.1 331.4 32.1 340 Q24.1 348.6 16.1 340Z" fill="#939393"/><circle cx="23.8" cy="339.9" r="2.9" fill="#f0f0f0"/><circle cx="23.8" cy="339.9" r="1.5" fill="#939393"/></g>
<defs><linearGradient id="sb332" x1="0" x2="1"><stop offset="0" stop-color="#f6a560"/><stop offset=".35" stop-color="#ee8a3a"/><stop offset="1" stop-color="#f29a52"/></linearGradient></defs><path d="M41.1 335.4 Q41.1 332 49.1 332 Q57.1 332 57.1 335.4 V346 Q55.6 347.4 53.2 347.6 V343.1 H48.300000000000004 V348 Q41.1 347.6 41.1 344.6Z" fill="url(#sb332)" stroke="#c8651a" stroke-width="1"/><ellipse cx="49.1" cy="335.1" rx="7" ry="2.5" fill="#fcdcc0"/><rect x="48.300000000000004" y="337.3" width="4.9" height="4.6" fill="#f8b482" stroke="#c8651a" stroke-width=".8"/><rect x="42.7" y="337.6" width="2.2" height="8.6" fill="#fbc79c" opacity=".75"/><rect x="54.1" y="337.6" width="1.6" height="8.4" fill="#fbc79c" opacity=".5"/>
<text x="71.0" y="343.9" font-size="11.6" font-weight="bold" fill="#fff" textLength="63.5" lengthAdjust="spacingAndGlyphs">Corps24 (1)</text>
<rect x="13.4" y="354" width="130.8" height="20" fill="#f0f0f0"/>
<rect x="38" y="354" width="106.2" height="20" fill="#0a8fd6"/>
<g opacity="1"><path d="M16.1 364 Q24.1 355.4 32.1 364 Q24.1 372.6 16.1 364Z" fill="#939393"/><circle cx="23.8" cy="363.9" r="2.9" fill="#f0f0f0"/><circle cx="23.8" cy="363.9" r="1.5" fill="#939393"/></g>
<defs><linearGradient id="sb356" x1="0" x2="1"><stop offset="0" stop-color="#f6a560"/><stop offset=".35" stop-color="#ee8a3a"/><stop offset="1" stop-color="#f29a52"/></linearGradient></defs><path d="M41.1 359.4 Q41.1 356 49.1 356 Q57.1 356 57.1 359.4 V370 Q55.6 371.4 53.2 371.6 V367.1 H48.300000000000004 V372 Q41.1 371.6 41.1 368.6Z" fill="url(#sb356)" stroke="#c8651a" stroke-width="1"/><ellipse cx="49.1" cy="359.1" rx="7" ry="2.5" fill="#fcdcc0"/><rect x="48.300000000000004" y="361.3" width="4.9" height="4.6" fill="#f8b482" stroke="#c8651a" stroke-width=".8"/><rect x="42.7" y="361.6" width="2.2" height="8.6" fill="#fbc79c" opacity=".75"/><rect x="54.1" y="361.6" width="1.6" height="8.4" fill="#fbc79c" opacity=".5"/>
<text x="71.0" y="367.9" font-size="11.6" font-weight="bold" fill="#fff" textLength="63.5" lengthAdjust="spacingAndGlyphs">Corps23 (1)</text>
<rect x="13.4" y="378" width="130.8" height="20" fill="#f0f0f0"/>
<rect x="38" y="378" width="106.2" height="20" fill="#0a8fd6"/>
<g opacity="1"><path d="M16.1 388 Q24.1 379.4 32.1 388 Q24.1 396.6 16.1 388Z" fill="#939393"/><circle cx="23.8" cy="387.9" r="2.9" fill="#f0f0f0"/><circle cx="23.8" cy="387.9" r="1.5" fill="#939393"/></g>
<defs><linearGradient id="sb380" x1="0" x2="1"><stop offset="0" stop-color="#f6a560"/><stop offset=".35" stop-color="#ee8a3a"/><stop offset="1" stop-color="#f29a52"/></linearGradient></defs><path d="M41.1 383.4 Q41.1 380 49.1 380 Q57.1 380 57.1 383.4 V394 Q55.6 395.4 53.2 395.6 V391.1 H48.300000000000004 V396 Q41.1 395.6 41.1 392.6Z" fill="url(#sb380)" stroke="#c8651a" stroke-width="1"/><ellipse cx="49.1" cy="383.1" rx="7" ry="2.5" fill="#fcdcc0"/><rect x="48.300000000000004" y="385.3" width="4.9" height="4.6" fill="#f8b482" stroke="#c8651a" stroke-width=".8"/><rect x="42.7" y="385.6" width="2.2" height="8.6" fill="#fbc79c" opacity=".75"/><rect x="54.1" y="385.6" width="1.6" height="8.4" fill="#fbc79c" opacity=".5"/>
<text x="71.0" y="391.9" font-size="11.6" font-weight="bold" fill="#fff" textLength="63.5" lengthAdjust="spacingAndGlyphs">Corps22 (1)</text>
<rect x="13.4" y="402" width="130.8" height="20" fill="#f0f0f0"/>
<rect x="38" y="402" width="106.2" height="20" fill="#0a8fd6"/>
<g opacity="1"><path d="M16.1 412 Q24.1 403.4 32.1 412 Q24.1 420.6 16.1 412Z" fill="#939393"/><circle cx="23.8" cy="411.9" r="2.9" fill="#f0f0f0"/><circle cx="23.8" cy="411.9" r="1.5" fill="#939393"/></g>
<defs><linearGradient id="sb404" x1="0" x2="1"><stop offset="0" stop-color="#f6a560"/><stop offset=".35" stop-color="#ee8a3a"/><stop offset="1" stop-color="#f29a52"/></linearGradient></defs><path d="M41.1 407.4 Q41.1 404 49.1 404 Q57.1 404 57.1 407.4 V418 Q55.6 419.4 53.2 419.6 V415.1 H48.300000000000004 V420 Q41.1 419.6 41.1 416.6Z" fill="url(#sb404)" stroke="#c8651a" stroke-width="1"/><ellipse cx="49.1" cy="407.1" rx="7" ry="2.5" fill="#fcdcc0"/><rect x="48.300000000000004" y="409.3" width="4.9" height="4.6" fill="#f8b482" stroke="#c8651a" stroke-width=".8"/><rect x="42.7" y="409.6" width="2.2" height="8.6" fill="#fbc79c" opacity=".75"/><rect x="54.1" y="409.6" width="1.6" height="8.4" fill="#fbc79c" opacity=".5"/>
<text x="71.0" y="415.9" font-size="11.6" font-weight="bold" fill="#fff" textLength="63.5" lengthAdjust="spacingAndGlyphs">Corps21 (1)</text>
<rect x="13.4" y="426" width="130.8" height="20" fill="#f0f0f0"/>
<rect x="38" y="426" width="106.2" height="20" fill="#0a8fd6"/>
<g opacity="1"><path d="M16.1 436 Q24.1 427.4 32.1 436 Q24.1 444.6 16.1 436Z" fill="#939393"/><circle cx="23.8" cy="435.9" r="2.9" fill="#f0f0f0"/><circle cx="23.8" cy="435.9" r="1.5" fill="#939393"/></g>
<defs><linearGradient id="sb428" x1="0" x2="1"><stop offset="0" stop-color="#f6a560"/><stop offset=".35" stop-color="#ee8a3a"/><stop offset="1" stop-color="#f29a52"/></linearGradient></defs><path d="M41.1 431.4 Q41.1 428 49.1 428 Q57.1 428 57.1 431.4 V442 Q55.6 443.4 53.2 443.6 V439.1 H48.300000000000004 V444 Q41.1 443.6 41.1 440.6Z" fill="url(#sb428)" stroke="#c8651a" stroke-width="1"/><ellipse cx="49.1" cy="431.1" rx="7" ry="2.5" fill="#fcdcc0"/><rect x="48.300000000000004" y="433.3" width="4.9" height="4.6" fill="#f8b482" stroke="#c8651a" stroke-width=".8"/><rect x="42.7" y="433.6" width="2.2" height="8.6" fill="#fbc79c" opacity=".75"/><rect x="54.1" y="433.6" width="1.6" height="8.4" fill="#fbc79c" opacity=".5"/>
<text x="71.0" y="439.9" font-size="11.6" font-weight="bold" fill="#fff" textLength="63.5" lengthAdjust="spacingAndGlyphs">Corps20 (3)</text>
<rect x="13.4" y="450" width="130.8" height="20" fill="#f0f0f0"/>
<rect x="38" y="450" width="106.2" height="20" fill="#0a8fd6"/>
<g opacity="1"><path d="M16.1 460 Q24.1 451.4 32.1 460 Q24.1 468.6 16.1 460Z" fill="#939393"/><circle cx="23.8" cy="459.9" r="2.9" fill="#f0f0f0"/><circle cx="23.8" cy="459.9" r="1.5" fill="#939393"/></g>
<defs><linearGradient id="sb452" x1="0" x2="1"><stop offset="0" stop-color="#f6a560"/><stop offset=".35" stop-color="#ee8a3a"/><stop offset="1" stop-color="#f29a52"/></linearGradient></defs><path d="M41.1 455.4 Q41.1 452 49.1 452 Q57.1 452 57.1 455.4 V466 Q55.6 467.4 53.2 467.6 V463.1 H48.300000000000004 V468 Q41.1 467.6 41.1 464.6Z" fill="url(#sb452)" stroke="#c8651a" stroke-width="1"/><ellipse cx="49.1" cy="455.1" rx="7" ry="2.5" fill="#fcdcc0"/><rect x="48.300000000000004" y="457.3" width="4.9" height="4.6" fill="#f8b482" stroke="#c8651a" stroke-width=".8"/><rect x="42.7" y="457.6" width="2.2" height="8.6" fill="#fbc79c" opacity=".75"/><rect x="54.1" y="457.6" width="1.6" height="8.4" fill="#fbc79c" opacity=".5"/>
<text x="71.0" y="463.9" font-size="11.6" font-weight="bold" fill="#fff" textLength="63.5" lengthAdjust="spacingAndGlyphs">Corps27 (1)</text>
<rect x="-1" y="474" width="146.6" height="20" fill="#f0f0f0"/>
<g fill="none" stroke="#949494" stroke-width="1"><path d="M-3.0 484 Q4.9 474.6 12.8 484 Q4.9 493.4 -3.0 484Z"/><circle cx="4.7" cy="484" r="3.5"/><path d="M-1.0999999999999996 478.2 L10.5 489.7" stroke="#777"/></g>
<path d="M22.900000000000002 477.40000000000003 H30.9 L31.700000000000003 479.8 H39.1 V490.20000000000005 H22.900000000000002Z" fill="#969696"/>
<text x="53.4" y="487.9" font-size="11.3" fill="#3a3a3a" textLength="80.2" lengthAdjust="spacingAndGlyphs">Zones de dessin</text>
<rect x="13.4" y="498" width="174.2" height="20" fill="#f0f0f0"/>
<g opacity="1"><path d="M16.1 508 Q24.1 499.4 32.1 508 Q24.1 516.6 16.1 508Z" fill="#cfcfcf"/><circle cx="23.8" cy="507.9" r="2.9" fill="#f0f0f0"/><circle cx="23.8" cy="507.9" r="1.5" fill="#cfcfcf"/></g>
<defs><linearGradient id="sky" x1="0" y1="0" x2="1" y2="1"><stop offset="0" stop-color="#9cc0e8"/><stop offset="1" stop-color="#d4e4f4"/></linearGradient></defs><rect x="40.9" y="500.1" width="16" height="15.7" fill="url(#sky)" stroke="#3c4250" stroke-width="1.3"/><path d="M41.6 515.1 V511.70000000000005 L50.5 506.70000000000005 L56.2 513.5 V515.1Z" fill="#5e6c80"/><path d="M50.9 508.1 L55.5 514.7" stroke="#c9d2de" stroke-width=".8"/><rect x="51.3" y="503.3" width="2.4" height="2.4" fill="#f6e9a0"/><circle cx="45.699999999999996" cy="511.5" r="3.1" fill="none" stroke="#d4242c" stroke-width="1.4"/><path d="M43.6 509.40000000000003 L47.8 513.6" stroke="#d4242c" stroke-width="1.2"/>
<text x="71.0" y="511.9" font-size="11.3" fill="#3a3a3a" textLength="107.6" lengthAdjust="spacingAndGlyphs">Zsebo_Z-04_Beke_3v</text>
<rect x="-1" y="522" width="115.0" height="20" fill="#f0f0f0"/>
<g opacity="1"><path d="M-2.0999999999999996 532 Q5.9 523.4 13.9 532 Q5.9 540.6 -2.0999999999999996 532Z" fill="#939393"/><circle cx="5.6000000000000005" cy="531.9" r="2.9" fill="#f0f0f0"/><circle cx="5.6000000000000005" cy="531.9" r="1.5" fill="#939393"/></g>
<path d="M22.900000000000002 525.4 H30.9 L31.700000000000003 527.8000000000001 H39.1 V538.2 H22.900000000000002Z" fill="#969696"/>
<text x="53.4" y="535.9" font-size="11.3" fill="#3a3a3a" textLength="49.5" lengthAdjust="spacingAndGlyphs">Esquisses</text>
<rect x="13.4" y="546" width="117.9" height="20" fill="#f0f0f0"/>
<g opacity="1"><path d="M16.1 556 Q24.1 547.4 32.1 556 Q24.1 564.6 16.1 556Z" fill="#939393"/><circle cx="23.8" cy="555.9" r="2.9" fill="#f0f0f0"/><circle cx="23.8" cy="555.9" r="1.5" fill="#939393"/></g>
<path d="M44.1 548.8 H53.1 M41.9 551.0 V560 M55.1 551.0 V555.4 M44.1 562 H49.5" stroke="#444" stroke-width="1.1" fill="none"/>
<rect x="40.6" y="547.5" width="2.6" height="2.6" fill="#444"/>
<rect x="53.800000000000004" y="547.5" width="2.6" height="2.6" fill="#444"/>
<rect x="40.6" y="560.7" width="2.6" height="2.6" fill="#444"/>
<rect x="50.6" y="559.2" width="6" height="4.4" fill="#ea858a" stroke="#d8323a" stroke-width="1.1"/><path d="M51.9 559 V557.6 Q53.6 555.2 55.3 557.6 V559" fill="none" stroke="#d8323a" stroke-width="1.1"/>
<text x="71.0" y="559.9" font-size="11.3" fill="#3a3a3a" textLength="49.4" lengthAdjust="spacingAndGlyphs">Esquisse2</text>
<rect x="250.5" y="139.5" width="319" height="381.5" fill="#f1f1f1" stroke="#c8c8c8" stroke-width="1"/>
<rect x="251" y="162.8" width="318" height="1" fill="#cbcbcb"/>
<circle cx="260.8" cy="151.6" r="4.6" fill="#262626"/><rect x="258" y="151" width="5.6" height="1.3" fill="#fff"/>
<text x="275.0" y="155.4" font-size="11.3" fill="#4a4a4a" textLength="41.4" lengthAdjust="spacingAndGlyphs">COUDRE</text>
<text x="263.0" y="183.2" font-size="11.3" fill="#2e2e2e" textLength="102.6" lengthAdjust="spacingAndGlyphs">Coudre des surfaces</text>
<rect x="379.5" y="165.6" width="91.8" height="26.4" rx="1.5" fill="#0795d8"/>
<path d="M388 172.4 L388 184 L390.8 181.6 L392.8 186 L394.6 185.2 L392.6 180.8 L396.2 180.6Z" fill="#c2c2c2" stroke="#2a2a2a" stroke-width=".9" stroke-linejoin="round"/>
<text x="401.0" y="183.2" font-size="11.3" fill="#fff" textLength="64.2" lengthAdjust="spacingAndGlyphs">7 sélectionné</text>
<path d="M483.6 175.7 L490.8 182.9 M490.8 175.7 L483.6 182.9" stroke="#3c3c3c" stroke-width="2"/>
<text x="263.0" y="213.4" font-size="11.3" fill="#2e2e2e" textLength="47.0" lengthAdjust="spacingAndGlyphs">Tolérance</text>
<rect x="380.5" y="196.5" width="156" height="25" fill="#fff" stroke="#c6c6c6" stroke-width="1"/>
<text x="383.2" y="213.4" font-size="11.3" fill="#222" textLength="40.2" lengthAdjust="spacingAndGlyphs">0.10 mm</text>
<rect x="384" y="236.2" width="144" height="5" rx="2.5" fill="#4c4c4c"/>
<defs><linearGradient id="th" x1="0" y1="0" x2="0" y2="1"><stop offset="0" stop-color="#ededed"/><stop offset="1" stop-color="#8c8c8c"/></linearGradient></defs>
<path d="M387.8 230.8 L394 236.6 V242 Q394 244.4 391.6 244.4 H383.8 Q381.4 244.4 381.4 242 V236.6Z" fill="url(#th)" stroke="#8a8a8a" stroke-width=".7"/>
<text x="263.0" y="273.2" font-size="11.3" fill="#2e2e2e" textLength="47.0" lengthAdjust="spacingAndGlyphs">Opération</text>
<rect x="380" y="255.6" width="157" height="26.6" rx="1.5" fill="#fff" stroke="#d9d9d9" stroke-width="1.1"/>
<path d="M383.6 265.6 Q383.6 263 389.4 263 Q395.4 263 395.4 265.6 V274 Q395.4 276.6 389.4 276.6 Q383.6 276.6 383.6 274Z" fill="#e2e2e2" stroke="#4a4a4a" stroke-width="1"/><path d="M383.6 265.6 Q383.6 268 389.4 268 Q395.4 268 395.4 265.6" fill="none" stroke="#999" stroke-width=".7"/>
<path d="M394.0 261.2 L394.7 264.2 L397.3 262.5 L395.6 265.1 L398.6 265.8 L395.6 266.5 L397.3 269.1 L394.7 267.4 L394.0 270.4 L393.3 267.4 L390.7 269.1 L392.4 266.5 L389.4 265.8 L392.4 265.1 L390.7 262.5 L393.3 264.2Z" fill="#f6a609"/>
<text x="403.2" y="273.2" font-size="11.3" fill="#222" textLength="73.4" lengthAdjust="spacingAndGlyphs">Nouveau corps</text>
<path d="M525.6 267 H531.4 L528.5 271Z" fill="#222"/>
<path d="M260.2 295.6 H269 L264.6 302.6Z" fill="#333"/>
<text x="275.0" y="303.4" font-size="11.5" font-weight="bold" fill="#333" textLength="119.4" lengthAdjust="spacingAndGlyphs">Résultat de la couture</text>
<text x="263.0" y="333.0" font-size="11.3" fill="#2e2e2e" textLength="70.6" lengthAdjust="spacingAndGlyphs">Arêtes isolées</text>
<text x="383.4" y="333.0" font-size="11.3" fill="#2e2e2e" textLength="12.0" lengthAdjust="spacingAndGlyphs">34</text>
<text x="263.0" y="363.0" font-size="11.3" fill="#2e2e2e" textLength="79.0" lengthAdjust="spacingAndGlyphs">Arêtes à coudre</text>
<text x="383.4" y="363.0" font-size="11.3" fill="#2e2e2e" textLength="12.0" lengthAdjust="spacingAndGlyphs">34</text>
<rect x="252" y="378.4" width="304" height="1" fill="#c9c9c9"/>
<path d="M260.2 395 H269 L264.6 402Z" fill="#333"/>
<text x="275.0" y="403.0" font-size="11.5" font-weight="bold" fill="#333" textLength="102.4" lengthAdjust="spacingAndGlyphs">Arêtes décousues</text>
<rect x="259.8" y="419.8" width="278.4" height="59" rx="1.5" fill="#fff" stroke="#dcdcdc" stroke-width="1.2"/>
<text x="265.0" y="437.2" font-size="11.5" font-weight="bold" fill="#333" textLength="30.6" lengthAdjust="spacingAndGlyphs">Arête</text>
<text x="430.2" y="437.2" font-size="11.5" font-weight="bold" fill="#333" textLength="49.0" lengthAdjust="spacingAndGlyphs">Jeu max.</text>
<circle cx="273.5" cy="462.5" r="5.7" fill="#f6f7fa" stroke="#bdbdbd" stroke-width="1.3"/><rect x="270.4" y="459.8" width="6.2" height="5.6" rx=".8" fill="#eceef4" stroke="#b4b4b4" stroke-width="1"/><path d="M277.8 466.9 L282.4 471.2" stroke="#ababab" stroke-width="2.4"/>
<path d="M293.4 456.1 V468.8 M308.5 456.1 V465 M293.4 459.6 H308.5 M295.4 458.4 V460.8 M306.5 458.4 V460.8" stroke="#b4b4b4" stroke-width="1" fill="none"/><path d="M300.4 467.6 L304.2 464.2 V466.2 H308.8 V471.6 L306.8 472 V469 H304.2 V471Z" fill="#a6c4ef" stroke="#96b6e6" stroke-width=".5"/>
<rect x="251" y="485" width="318" height="1" fill="#d0d0d0"/>
<circle cx="264.9" cy="504" r="5.2" fill="#111"/><rect x="264" y="503" width="1.9" height="4.2" fill="#fff"/><circle cx="264.9" cy="501" r="1.1" fill="#fff"/>
<rect x="428.5" y="494.7" width="59" height="17.4" fill="#e8e8e8" stroke="#b4b4b4" stroke-width="1"/>
<text x="449.2" y="508.0" font-size="12.4" fill="#5e5e5e" textLength="17.8" lengthAdjust="spacingAndGlyphs">OK</text>
<rect x="498.5" y="494.7" width="59" height="17.4" fill="#e8e8e8" stroke="#b4b4b4" stroke-width="1"/>
<text x="507.0" y="508.0" font-size="12.4" fill="#5e5e5e" textLength="42.4" lengthAdjust="spacingAndGlyphs">Annuler</text>
<rect x="501.8" y="579.8" width="236.6" height="4" fill="#eeeeee"/>
</svg></body></html>
